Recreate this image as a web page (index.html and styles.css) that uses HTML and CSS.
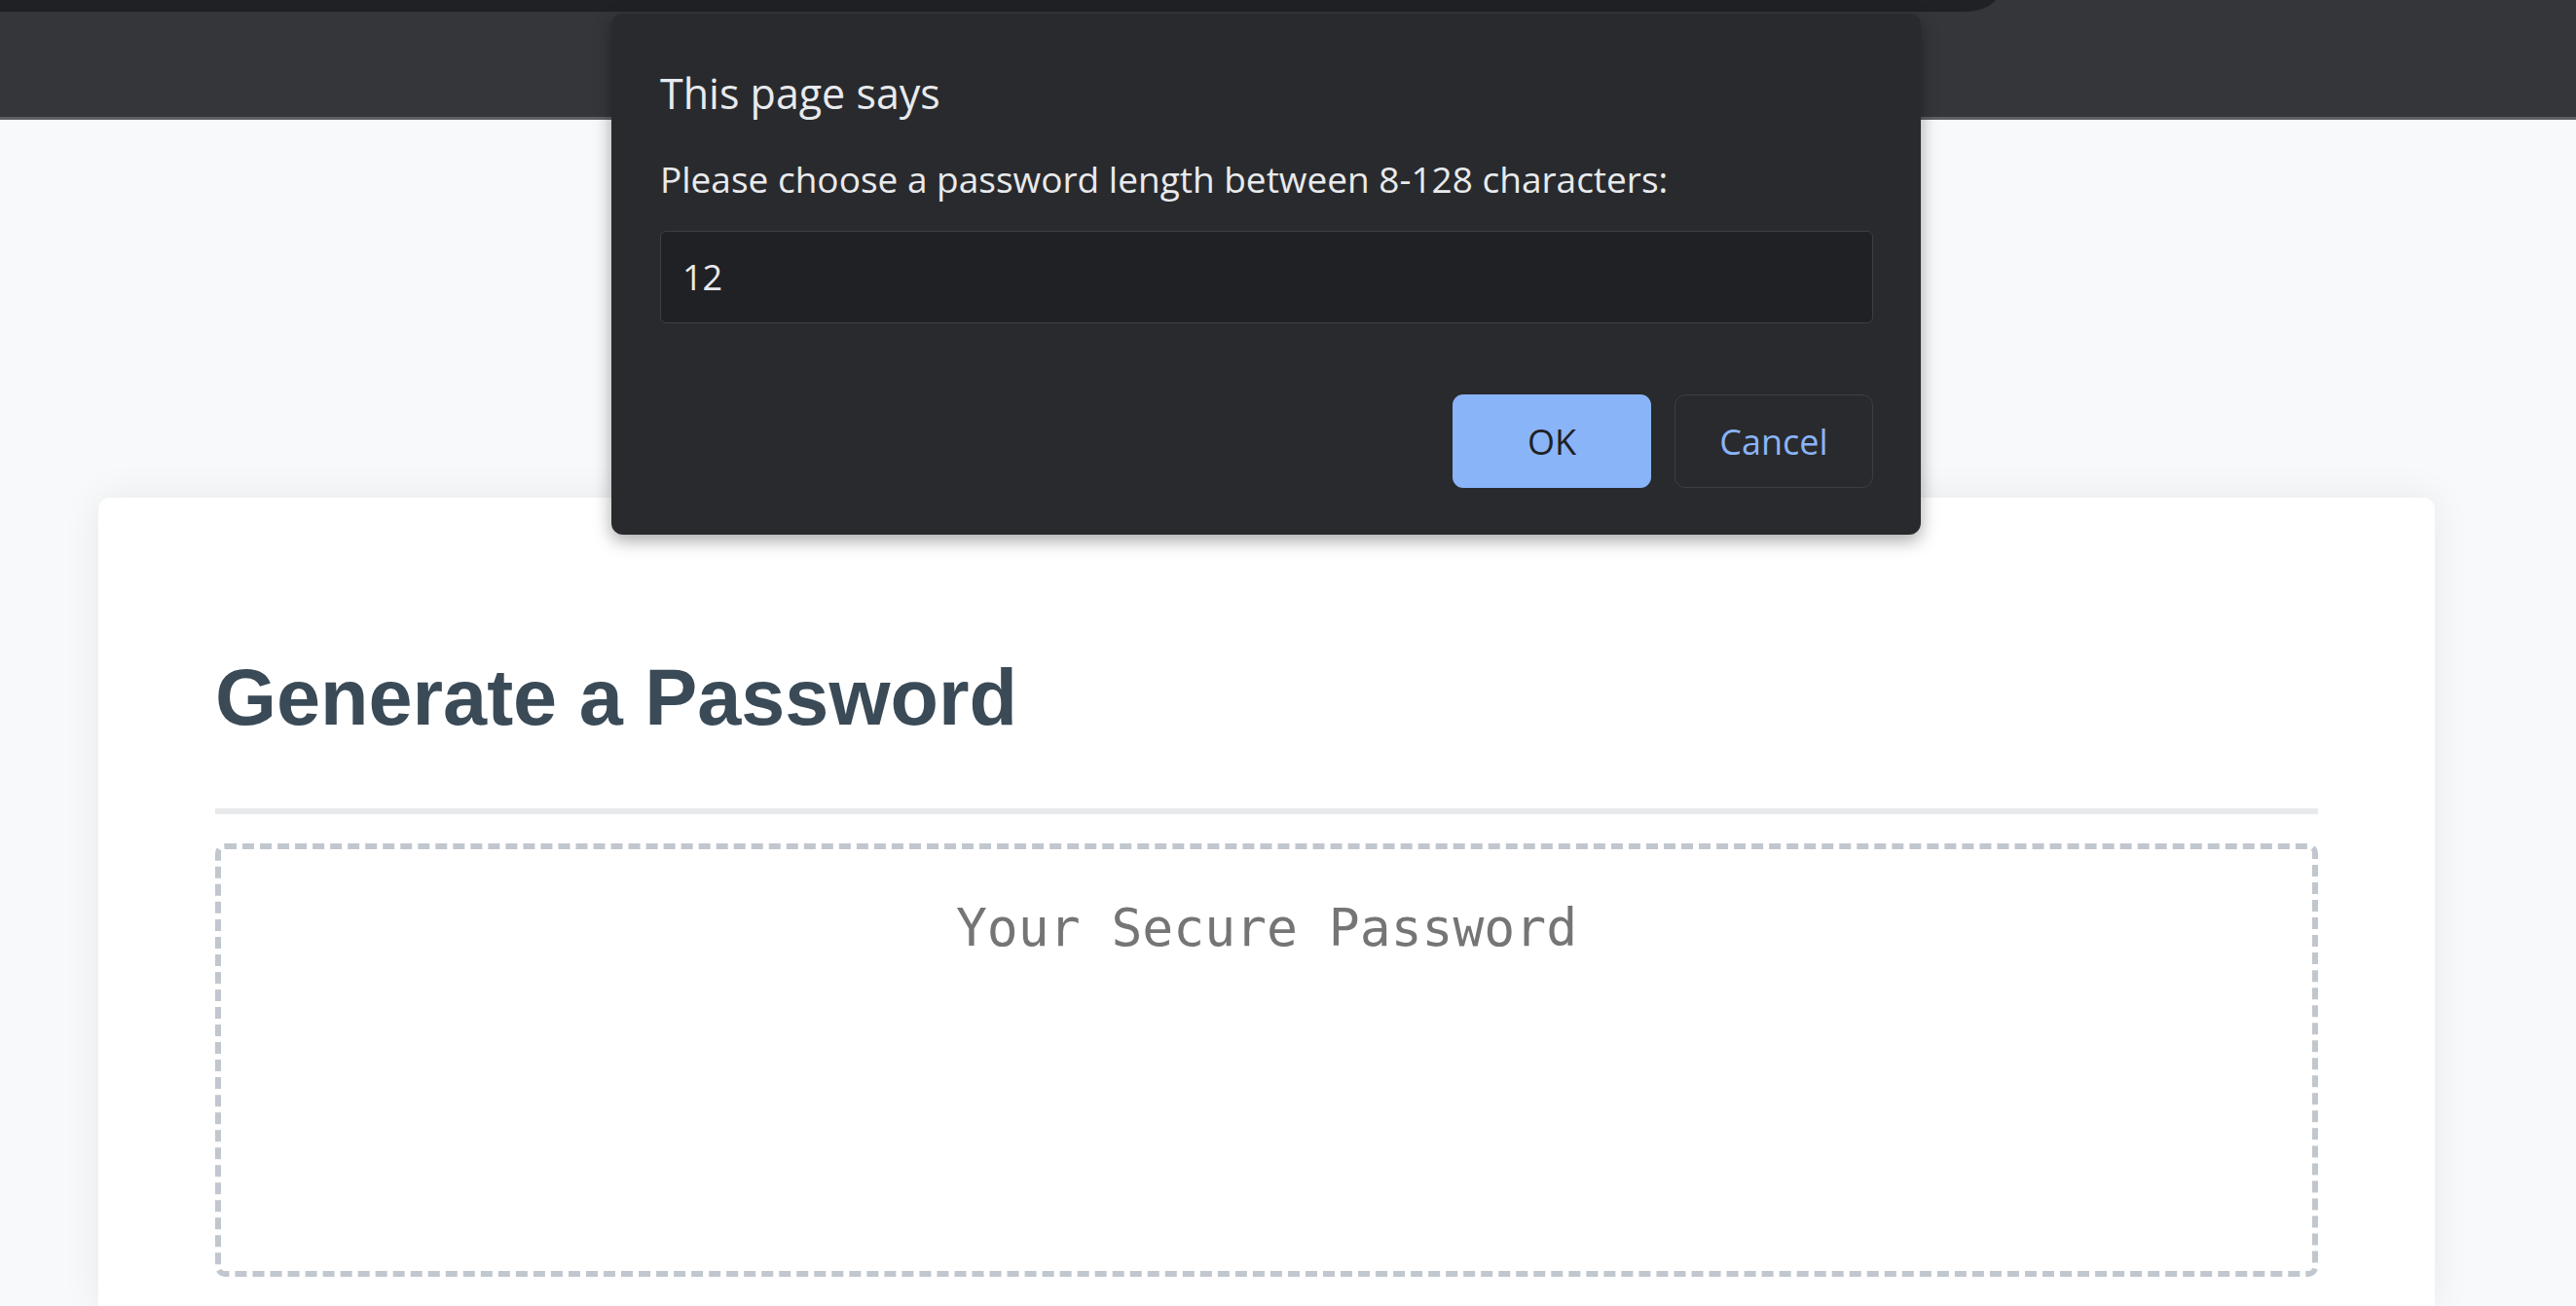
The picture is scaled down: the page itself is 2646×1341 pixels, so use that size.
FILE: index.html
```html
<!DOCTYPE html>
<html lang="en">
<head>
<meta charset="utf-8">
<title>Password Generator</title>
<link rel="stylesheet" href="styles.css">
</head>
<body>
  <header class="chrome">
    <div class="omni-edge"></div>
  </header>

  <main class="page">
    <section class="card">
      <h1 class="card-title">Generate a Password</h1>
      <div class="divider"></div>
      <div class="pw-box">
        <textarea class="pw-output" readonly placeholder="Your Secure Password"></textarea>
      </div>
    </section>
  </main>

  <div class="dialog" role="dialog">
    <div class="dialog-title">This page says</div>
    <div class="dialog-msg">Please choose a password length between 8-128 characters:</div>
    <div class="dialog-input">12</div>
    <div class="dialog-actions">
      <button class="btn btn-ok">OK</button>
      <button class="btn btn-cancel">Cancel</button>
    </div>
  </div>
</body>
</html>
```

FILE: styles.css
```css
* { box-sizing: border-box; }

html, body {
  margin: 0;
  padding: 0;
}

body {
  width: 2646px;
  height: 1341px;
  overflow: hidden;
  background: #f8f9fa;
  font-family: "Liberation Sans", Arial, sans-serif;
  position: relative;
}

/* browser chrome strip */
.chrome {
  height: 123px;
  background: #35363a;
  border-bottom: 3px solid #5f6064;
  position: relative;
  overflow: hidden;
}

.omni-edge {
  position: absolute;
  left: 0;
  top: -8px;
  width: 2053px;
  height: 20px;
  background: #202124;
  border-bottom-right-radius: 36px 20px;
}

/* page */
.page {
  padding-top: 388px;
  padding-left: 101px;
}

.card {
  width: 2400px;
  height: 830px;
  background: #ffffff;
  border-radius: 12px 12px 0 0;
  box-shadow: 0 0 40px rgba(0, 0, 0, 0.07);
  padding: 159px 120px 0 120px;
}

.card-title {
  margin: 0;
  font-family: "Liberation Sans", Arial, sans-serif;
  font-weight: 700;
  font-size: 81px;
  line-height: 92px;
  color: #3a4a56;
}

.divider {
  margin-top: 68px;
  height: 6px;
  background: #e8e9eb;
}

.pw-box {
  margin-top: 30px;
  height: 445px;
  border: 6px dashed #c1c7ce;
  border-radius: 10px;
}

.pw-output {
  display: block;
  width: 100%;
  height: 100%;
  border: none;
  outline: none;
  resize: none;
  overflow: hidden;
  background: transparent;
  padding: 50px 20px 0 20px;
  font-family: "DejaVu Sans Mono", monospace;
  font-size: 53px;
  line-height: 62px;
  text-align: center;
  color: #757575;
}

.pw-output::placeholder {
  color: #757575;
  opacity: 1;
}

/* alert dialog */
.dialog {
  position: absolute;
  left: 628px;
  top: 14px;
  width: 1345px;
  height: 535px;
  background: #292a2d;
  border-radius: 12px;
  box-shadow: 0 6px 18px rgba(0, 0, 0, 0.35);
  padding: 53px 49px 48px 50px;
  display: flex;
  flex-direction: column;
  font-family: "Open Sans", "Noto Sans", sans-serif;
  color: #e8eaed;
}

.dialog-title {
  font-size: 43px;
  line-height: 58px;
}

.dialog-msg {
  margin-top: 34px;
  font-size: 37px;
  line-height: 49px;
}

.dialog-input {
  margin-top: 29px;
  height: 95px;
  background: #202124;
  border: 1px solid #3e3f43;
  border-radius: 6px;
  padding-left: 22px;
  font-size: 36px;
  line-height: 93px;
  color: #e8eaed;
}

.dialog-actions {
  margin-top: auto;
  display: flex;
  justify-content: flex-end;
  gap: 24px;
}

.btn {
  width: 204px;
  height: 96px;
  border-radius: 11px;
  font-family: "Open Sans", "Noto Sans", sans-serif;
  font-size: 36px;
  font-weight: 500;
  cursor: pointer;
}

.btn-ok {
  background: #8ab4f8;
  border: none;
  color: #202124;
}

.btn-cancel {
  background: #292a2d;
  border: 1px solid #3c3e42;
  color: #8ab4f8;
}
```
